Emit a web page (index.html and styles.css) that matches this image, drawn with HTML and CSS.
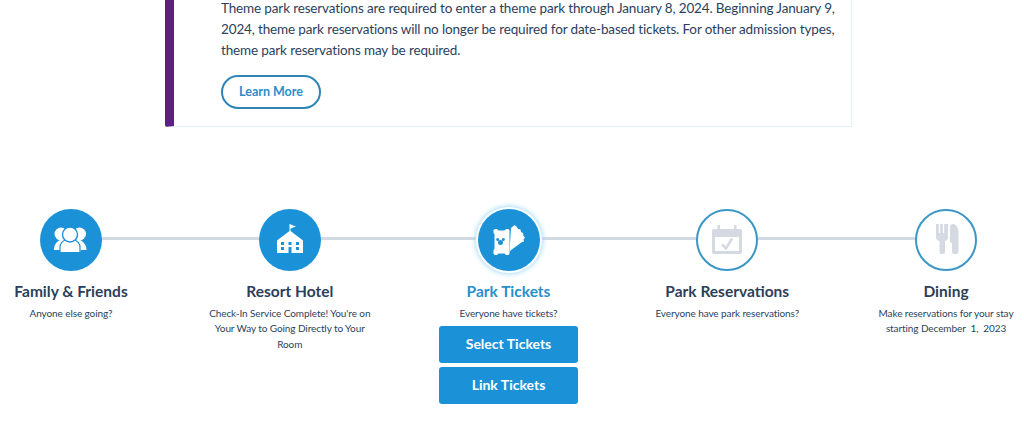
FILE: index.html
```html
<!DOCTYPE html>
<html lang="en">
<head>
<meta charset="utf-8">
<title>Plan your visit</title>
<link rel="stylesheet" href="styles.css">
</head>
<body>
<section class="banner">
  <p class="banner-text">Theme park reservations are required to enter a theme park through January 8, 2024. Beginning January 9, 2024, theme park reservations will no longer be required for date-based tickets. For other admission types, theme park reservations may be required.</p>
  <a class="learn-more">Learn More</a>
</section>
<section class="steps">
  <div class="steps-line"></div>
  <div class="step">
    <div class="circle filled">
      <svg class="icon" viewBox="0 0 62 62">
        <g fill="#fff">
          <circle cx="21" cy="25" r="6.500"/><circle cx="39.500" cy="25" r="6.500"/>
          <path d="M14 41c0-5 2-8 6-10h20c4 2 6.500 5 6.500 10h-6v2H20v-2z"/>
          <path d="M20 43.500v-5c0-4 3-7 7-8h6c4 1 7 4 7 8v5z" stroke="#1b92d8" stroke-width="1.200"/>
          <circle cx="30" cy="25.500" r="7.500" stroke="#1b92d8" stroke-width="1.400"/>
        </g>
      </svg>
    </div>
    <h3 class="step-title">Family &amp; Friends</h3>
    <p class="step-desc">Anyone else going?</p>
  </div>
  <div class="step">
    <div class="circle filled">
      <svg class="icon" viewBox="0 0 62 62">
        <path fill="#fff" d="M30.500 15h1v.500l5.500 2-5.500 2V22l12.500 9.500V44H18V31.500L30.500 22zM22 33v3h3v-3zm7.500 0v3h3v-3zm7.500 0v3h3v-3zm-15 5v3h3v-3zm7.500 0v6h3v-6zm7.500 0v3h3v-3z" fill-rule="evenodd"/>
      </svg>
    </div>
    <h3 class="step-title">Resort Hotel</h3>
    <p class="step-desc">Check-In Service Complete! You're on Your Way to Going Directly to Your Room</p>
  </div>
  <div class="step">
    <div class="circle filled active">
      <svg class="icon" viewBox="0 0 62 62">
        <path fill="#fff" d="M33 19l3.500-3 2 1.500 1.500 2.500 2.500.5.500 2.500 2 1 .5 3 1.500 1.500-1.500 2 .5 2-2 .500-9.500 7-3 2.500z"/>
        <path fill="#fff" d="M17 20h2l1.500 1.500h6L28 20h2.500l1 1.500v23l-1 1.500H28l-1.500-1.500h-6L19 46h-2.500l-1-1.500V41l1-1V25l-1-1v-3z"/>
        <g fill="#1b92d8"><circle cx="22.500" cy="33.500" r="2.500"/><circle cx="19.700" cy="30.600" r="1.500"/><circle cx="25.300" cy="30.600" r="1.500"/></g>
      </svg>
    </div>
    <h3 class="step-title current">Park Tickets</h3>
    <p class="step-desc">Everyone have tickets?</p>
    <a class="action">Select Tickets</a>
    <a class="action">Link Tickets</a>
  </div>
  <div class="step">
    <div class="circle">
      <svg class="icon" viewBox="0 0 62 62">
        <path fill="#d5dae2" fill-rule="evenodd" d="M18 20h3.500v-4h2.500v4h14v-4h2.500v4H44a2 2 0 0 1 2 2v21a2 2 0 0 1-2 2H18a2 2 0 0 1-2-2V22a2 2 0 0 1 2-2zm1 8v14h24V28z"/>
        <path fill="none" stroke="#d5dae2" stroke-width="2.600" d="M26 35.500l4 4 6-10"/>
      </svg>
    </div>
    <h3 class="step-title">Park Reservations</h3>
    <p class="step-desc">Everyone have park reservations?</p>
  </div>
  <div class="step">
    <div class="circle">
      <svg class="icon" viewBox="0 0 62 62">
        <path fill="#d5dae2" d="M21 15h2.800v9h1.400v-9h2.600v9h1.400v-9H33v13c0 2-1 3.500-3 4v11a2 2 0 0 1-2 2h-1.500a2 2 0 0 1-2-2V32c-2.500-.5-3.500-2-3.500-4z"/>
        <path fill="#d5dae2" d="M38 15c3.500 0 5.500 4 5.500 9v19a2 2 0 0 1-2 2h-2.500a2 2 0 0 1-2-2V34c-1 0-2-1-2-2V18c0-2 1-3 3-3z"/>
      </svg>
    </div>
    <h3 class="step-title">Dining</h3>
    <p class="step-desc">Make reservations for your stay<br>starting December&nbsp; 1,&nbsp; 2023</p>
  </div>
</section>
</body>
</html>
```
FILE: styles.css
```css
html, body {
  margin: 0;
  padding: 0;
  overflow: hidden;
  background: #fff;
}
body {
  height: 430px;
  font-family: "Lato", "Liberation Sans", sans-serif;
  color: #2b3f5c;
}
.banner {
  box-sizing: border-box;
  display: flow-root;
  width: 687px;
  height: 127px;
  margin-left: 165px;
  padding: 0 10px 0 47px;
  border-left: 9px solid #5d1f80;
  border-right: 1px solid #e1f3f5;
  border-bottom: 1px solid #e1f3f5;
  border-bottom-left-radius: 2px;
}
.banner-text {
  margin: -2px 0 0;
  font-size: 13.500px;
  letter-spacing: -0.14px;
  line-height: 21px;
}
.learn-more {
  box-sizing: border-box;
  display: flex;
  align-items: center;
  justify-content: center;
  width: 100px;
  height: 34px;
  margin-top: 14px;
  padding-bottom: 2px;
  border: 2px solid #2c86b6;
  border-radius: 17px;
  color: #2a8fc9;
  font-size: 12.500px;
  font-weight: 700;
}
.steps {
  position: relative;
  display: flex;
  justify-content: space-between;
  margin-top: 82px;
  padding-right: 7px;
}
.steps-line {
  position: absolute;
  left: 71px;
  right: 78px;
  top: 28px;
  height: 3px;
  background: #d0dae2;
}
.step {
  position: relative;
  display: flex;
  flex-direction: column;
  align-items: center;
  width: 142px;
}
.circle {
  box-sizing: border-box;
  width: 62px;
  height: 62px;
  border: 2px solid #3b97c6;
  border-radius: 50%;
  background: #fff;
}
.circle.filled {
  border: 0;
  background: #1b92d8;
}
.circle.active {
  box-shadow: 0 0 0 2px #fff, 0 0 5px 3px #a9dcf5;
}
.icon {
  display: block;
  width: 62px;
  height: 62px;
}
.circle:not(.filled) .icon {
  margin: -2px;
}
.step-title {
  margin: 10px 0 0;
  font-size: 15.500px;
  line-height: 20px;
  font-weight: 700;
  white-space: nowrap;
}
.step-title.current {
  color: #2a8fc9;
}
.step-desc {
  width: 170px;
  margin: 5px 0 0;
  font-size: 10px;
  letter-spacing: -0.09px;
  line-height: 15.300px;
  text-align: center;
}
.action {
  box-sizing: border-box;
  display: flex;
  align-items: center;
  justify-content: center;
  width: 139px;
  height: 37px;
  margin-top: 4px;
  padding-bottom: 2px;
  border-radius: 3px;
  background: #1b92d8;
  color: #fff;
  font-size: 14px;
  font-weight: 700;
}
.step-desc + .action {
  margin-top: 5px;
}
```
